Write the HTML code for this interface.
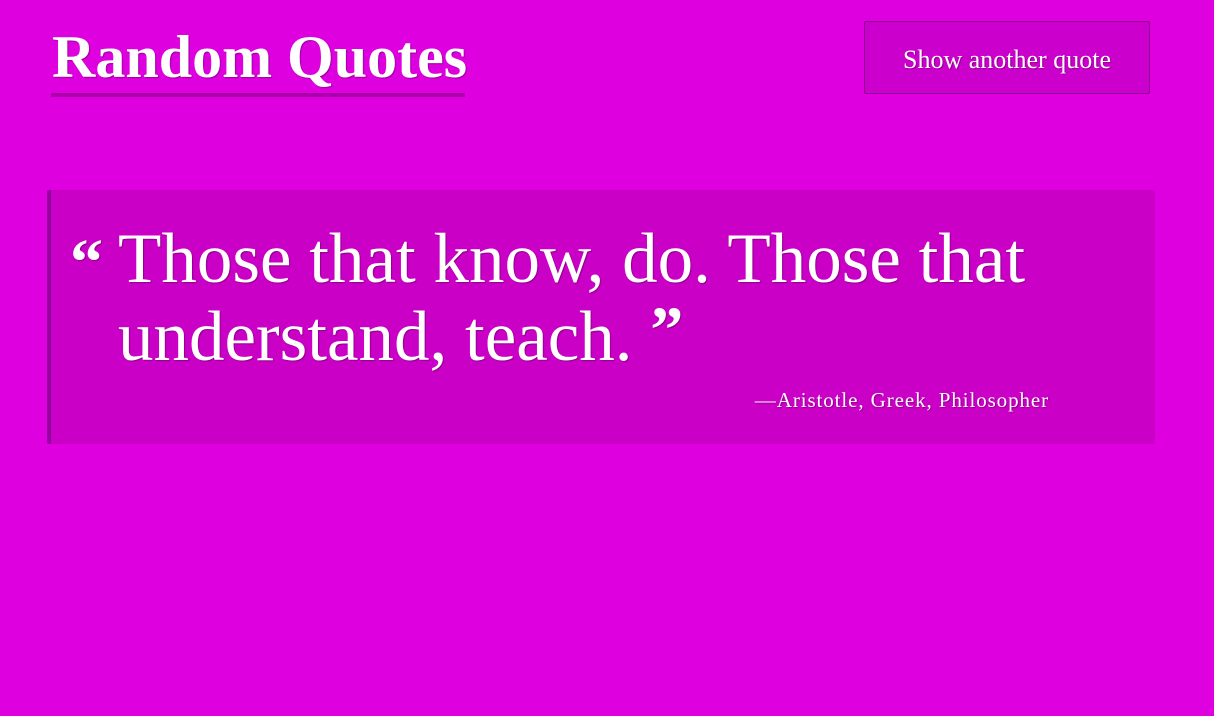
<!DOCTYPE html>
<html><head><meta charset="utf-8"><style>
html,body{margin:0;padding:0;background:#df00df;width:1214px;height:716px;overflow:hidden;font-family:"Liberation Serif",serif;color:#fff}
.title{position:absolute;left:52px;top:22px;font-size:60px;font-weight:bold;line-height:70px;text-shadow:1px 1px 1px rgba(0,0,0,.3);white-space:nowrap}
.ul{position:absolute;left:51px;top:93px;width:414px;height:4px;background:#aa00aa}
.btn{position:absolute;left:864px;top:21px;width:284px;height:71px;background:#cc00cc;border:1px solid #8f0090;border-radius:2px;font-size:26px;line-height:76px;text-align:center;text-shadow:1px 1px 1px rgba(0,0,0,.3)}
.box{position:absolute;left:47px;top:190px;width:1104px;height:254px;background:#cb00c6;border-left:4px solid #9400a0;border-radius:2px}
.q{position:absolute;left:118px;top:220px;font-size:71px;line-height:78px;white-space:nowrap;text-shadow:1px 1px 1px rgba(0,0,0,.3)}
.oq{position:absolute;left:70px;top:230px;font-size:66px;font-weight:bold;line-height:66px;text-shadow:1px 1px 1px rgba(0,0,0,.3)}
.cq{font-size:66px;font-weight:bold;line-height:0;vertical-align:8px}
.att{position:absolute;right:165px;top:386px;font-size:21px;line-height:28px;letter-spacing:0.9px;text-shadow:1px 1px 1px rgba(0,0,0,.3)}
</style></head><body>
<div class="title">Random Quotes</div>
<div class="ul"></div>
<div class="btn">Show another quote</div>
<div class="box"></div>
<div class="oq">“</div>
<div class="q">Those that know, do. Those that<br>understand, teach. <span class="cq">”</span></div>
<div class="att">—Aristotle, Greek, Philosopher</div>
</body></html>
